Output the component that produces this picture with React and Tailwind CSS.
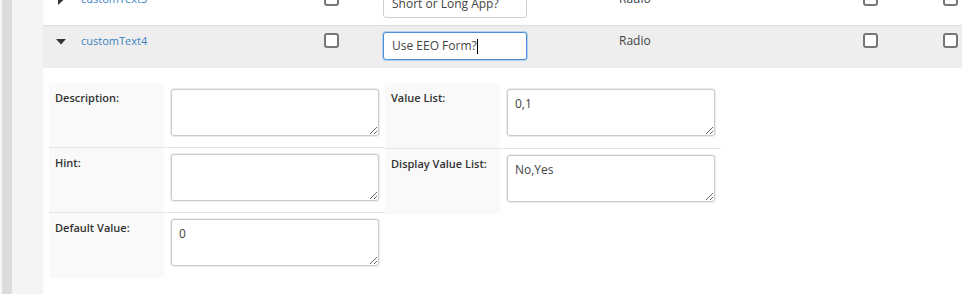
import React from 'react';

const font = { fontFamily: '"Open Sans", "Liberation Sans", sans-serif' };

const Checkbox = () => (
  <span className="block w-[15px] h-[15px] border-2 border-[#777] rounded-[3px] bg-white" />
);

const Caret = ({ open }) =>
  open ? (
    <svg width="10" height="6" viewBox="0 0 10 6" className="block">
      <polygon points="0,0 10,0 5,5.5" fill="#333" />
    </svg>
  ) : (
    <svg width="6" height="10" viewBox="0 0 6 10" className="block">
      <polygon points="0,0 5.5,5 0,10" fill="#333" />
    </svg>
  );

const FieldRow = ({ name, label, open, focused }) => (
  <div
    className={
      'grid grid-cols-[38px_243px_59px_236px_244px_80px_1fr] h-[42px] ' +
      (open ? 'bg-[#eeeeee]' : 'bg-white border-b border-[#dedede]')
    }
  >
    <div className={open ? 'pl-[13px] pt-[13px]' : 'pl-[15px] pt-[11px]'}>
      <Caret open={open} />
    </div>
    <div className="pt-[7px] text-[11px] leading-[16px] text-[#3b82c4]">{name}</div>
    <div className="pt-[7px]">
      <Checkbox />
    </div>
    <div className="pt-[6px]">
      {focused ? (
        <div className="w-[144px] h-[28px] rounded-[3px] border border-[#4a90d9] shadow-[0_0_0_1px_#b3d1ef] bg-white px-[8px] flex items-center text-[12px] text-[#444]">
          {label}
          <span className="inline-block w-px h-[15px] bg-black" />
        </div>
      ) : (
        <div className="w-[144px] h-[28px] rounded-[3px] border border-[#cfcfcf] bg-white px-[8px] flex items-center text-[12px] text-[#444]">
          {label}
        </div>
      )}
    </div>
    <div className="pt-[7px] text-[12px] leading-[16px] text-[#444]">Radio</div>
    <div className="pt-[7px]">
      <Checkbox />
    </div>
    <div className="pt-[7px]">
      <Checkbox />
    </div>
  </div>
);

const Item = ({ label, value = '', border = true }) => (
  <div className={'flex h-[65px] ' + (border ? 'border-b border-[#e4e4e4]' : '')}>
    <div className="w-[115px] shrink-0 bg-[#f9f9f9] px-[6px] pt-[7px] text-[11px] leading-[15px] font-semibold text-[#333]">
      {label}
    </div>
    <div className="w-[221px] shrink-0 pl-[7px] pt-[6px]">
      <textarea
        defaultValue={value}
        className="block w-[208px] h-[47px] rounded-[3px] border border-[#cccccc] shadow-[0_0_0_1px_#ececec] bg-white px-[7px] py-[6px] text-[12px] leading-[16px] text-[#444] outline-none"
        style={font}
      />
    </div>
  </div>
);

export default function App() {
  return (
    <div className="w-[964px] h-[297px] overflow-hidden bg-white" style={font}>
      <div className="flex h-[294px]">
        <div className="w-[2px] bg-[#f6f6f6]" />
        <div className="w-[10px] bg-[#dcdcdc]" />
        <div className="w-[31px] bg-[#f4f4f4]" />
        <div className="flex-1 pr-[2px] overflow-hidden">
          <div className="-mt-[16px]">
            <FieldRow name="customText3" label="Short or Long App?" />
            <FieldRow name="customText4" label="Use EEO Form?" open focused />
          </div>
          {/* expanded details */}
          <div className="flex mt-[15px] ml-[6px]">
            <div className="flex flex-col">
              <Item label="Description:" />
              <Item label="Hint:" />
              <Item label="Default Value:" value="0" border={false} />
            </div>
            <div className="flex flex-col">
              <div className="border-b border-[#e4e4e4]">
                <Item label="Value List:" value="0,1" border={false} />
              </div>
              <Item label="Display Value List:" value="No,Yes" border={false} />
            </div>
          </div>
        </div>
      </div>
    </div>
  );
}
